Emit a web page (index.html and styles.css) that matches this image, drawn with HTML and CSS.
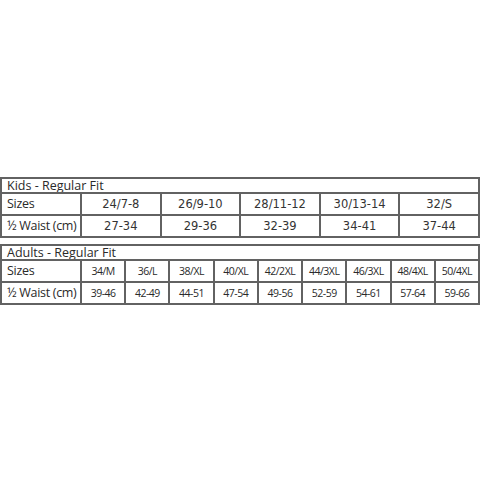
FILE: index.html
```html
<!DOCTYPE html>
<html>
<head>
<meta charset="utf-8">
<link rel="stylesheet" href="styles.css">
</head>
<body>
<div class="page">
  <table class="chart kids">
    <colgroup>
      <col class="c-label"><col><col><col><col><col>
    </colgroup>
    <tr class="head"><td colspan="6">Kids - Regular Fit</td></tr>
    <tr class="row">
      <td class="label">Sizes</td>
      <td>24/7-8</td><td>26/9-10</td><td>28/11-12</td><td>30/13-14</td><td>32/S</td>
    </tr>
    <tr class="row">
      <td class="label">½ Waist (cm)</td>
      <td>27-34</td><td>29-36</td><td>32-39</td><td>34-41</td><td>37-44</td>
    </tr>
  </table>
  <table class="chart adults">
    <colgroup>
      <col class="c-label"><col><col><col><col><col><col><col><col><col>
    </colgroup>
    <tr class="head"><td colspan="10">Adults - Regular Fit</td></tr>
    <tr class="row">
      <td class="label">Sizes</td>
      <td>34/M</td><td>36/L</td><td>38/XL</td><td>40/XL</td><td>42/2XL</td><td>44/3XL</td><td>46/3XL</td><td>48/4XL</td><td>50/4XL</td>
    </tr>
    <tr class="row">
      <td class="label">½ Waist (cm)</td>
      <td>39-46</td><td>42-49</td><td>44-51</td><td>47-54</td><td>49-56</td><td>52-59</td><td>54-61</td><td>57-64</td><td>59-66</td>
    </tr>
  </table>
</div>
</body>
</html>
```
FILE: styles.css
```css
html, body {
  margin: 0;
  padding: 0;
  background: #fff;
}
.page {
  padding-top: 177px;
  display: flex;
  flex-direction: column;
  gap: 6px;
}
.chart {
  width: 480px;
  border-collapse: collapse;
  table-layout: fixed;
  color: #2a2a2a;
  font-family: "Open Sans", "Noto Sans", sans-serif;
}
.chart col.c-label {
  width: 80px;
}
.chart td {
  border: 2px solid #626262;
  padding: 0;
  text-align: center;
  white-space: nowrap;
  overflow: hidden;
}
.chart .head td {
  text-align: left;
  padding-left: 5px;
  font-size: 12.5px;
  height: 13px;
  line-height: 13px;
}
.chart .row td {
  height: 20px;
  line-height: 20px;
}
.chart td.label {
  text-align: left;
  padding-left: 5px;
  font-family: "Open Sans", "Noto Sans", sans-serif;
  font-size: 12.5px;
  letter-spacing: -0.3px;
}
.kids .row td {
  font-family: "DejaVu Sans", Verdana, sans-serif;
  font-size: 11.5px;
  color: #333;
}
.kids .row td.label {
  font-family: "Open Sans", "Noto Sans", sans-serif;
  font-size: 12.5px;
  color: #2a2a2a;
}
.adults .row td {
  font-size: 10.5px;
  letter-spacing: -0.5px;
}
.adults .row td.label {
  font-size: 12.5px;
  letter-spacing: -0.3px;
}
```
